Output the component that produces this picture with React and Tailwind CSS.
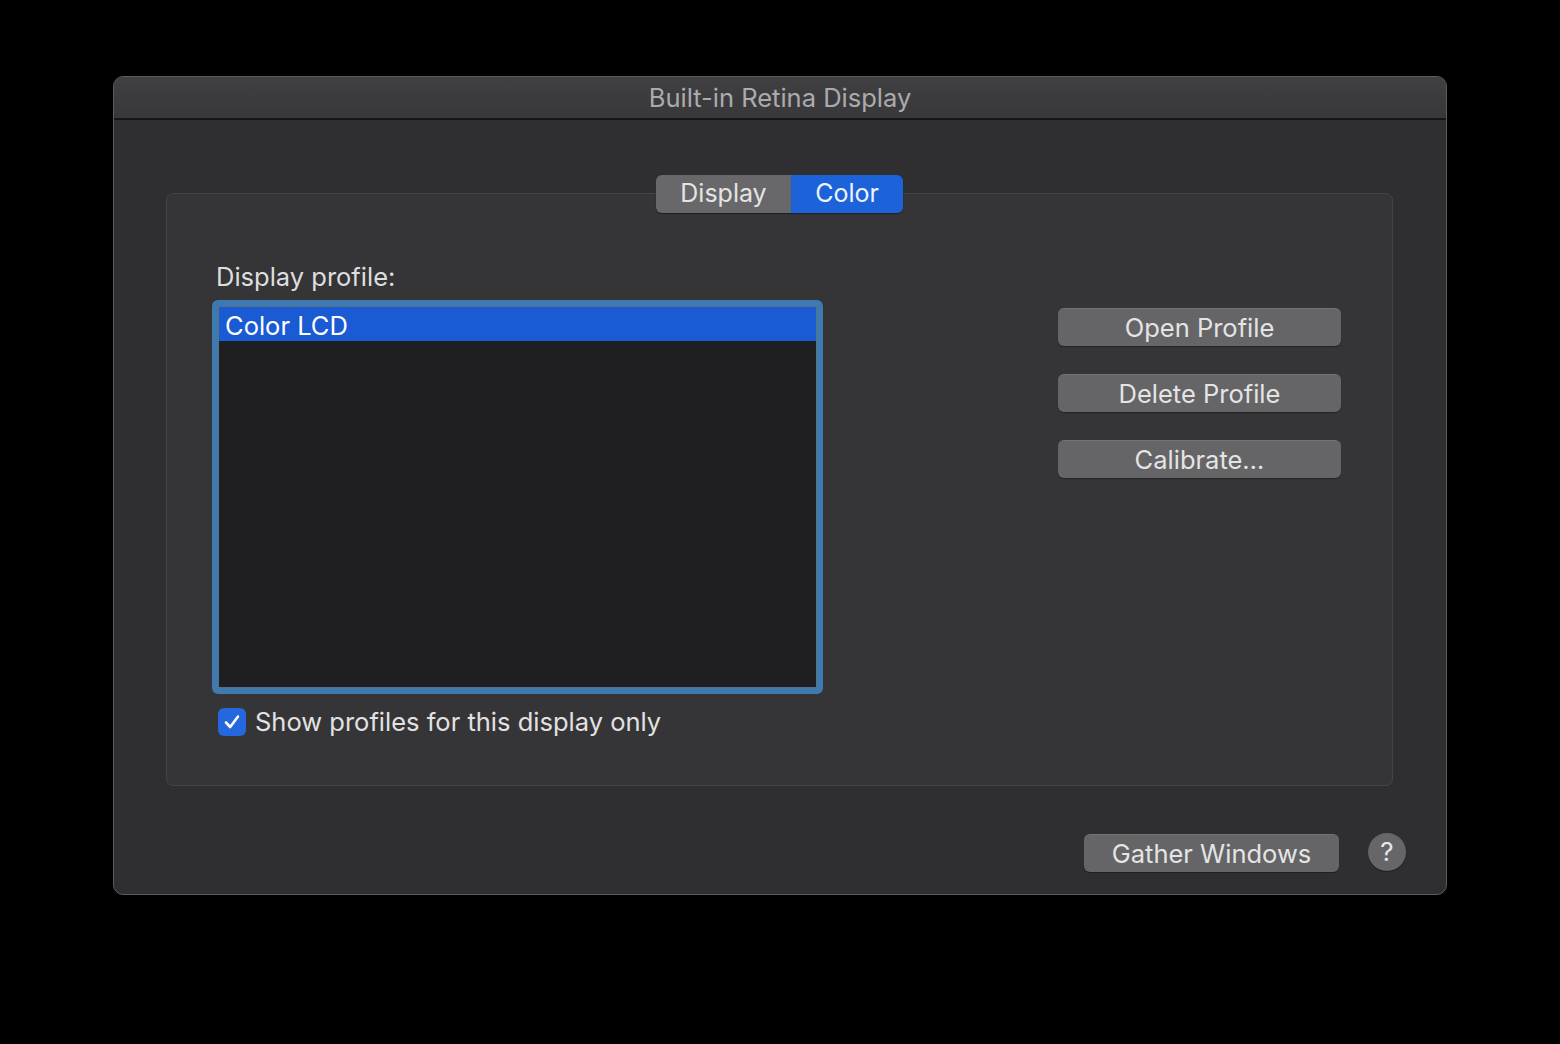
import React from "react";

const font = { fontFamily: "Inter, 'Noto Sans', 'Liberation Sans', sans-serif" };

// Grey push button, macOS dark style
const PushButton = ({ label, className = "" }) => (
  <button
    className={`h-[38px] rounded-[6px] bg-[#656567] text-[25.5px] leading-none text-[#e4e4e4] shadow-[0_1px_1px_rgba(0,0,0,0.35)] border-t border-[#737375] ${className}`}
  >
    {label}
  </button>
);

const SegmentedControl = () => (
  <div className="relative z-10 flex h-[38px] self-center overflow-hidden rounded-[6px] shadow-[0_1px_1px_rgba(0,0,0,0.4)]">
    <div className="flex w-[135px] items-center justify-center bg-[#68686a] text-[25px] text-[#e4e4e4]">
      Display
    </div>
    <div className="flex w-[112px] items-center justify-center bg-[#1c63d9] text-[25px] text-[#eef3ff]">
      Color
    </div>
  </div>
);

const ProfileList = () => (
  <div className="h-[394px] w-[611px] rounded-[6px] border-[5px] border-[#3c7ab1] bg-[#3c7ab1]">
    <div className="h-full w-full border-2 border-[#4d7499] bg-[#1f1f21]">
      <div className="flex h-[34px] items-center bg-[#1a5ad3] pl-[6px] pt-[4px] text-[25.5px] text-white">
        Color LCD
      </div>
    </div>
  </div>
);

const Checkbox = () => (
  <div className="flex h-[28px] w-[28px] items-center justify-center rounded-[6px] bg-[#2467de]">
    <svg width="20" height="20" viewBox="0 0 20 20" fill="none">
      <path d="M4 10.5 L8.2 15 L16 4.5" stroke="white" strokeWidth="2.6" strokeLinecap="round" strokeLinejoin="round" />
    </svg>
  </div>
);

export default function App() {
  return (
    <div className="h-[1044px] w-[1560px] bg-black pl-[113px] pt-[76px]" style={font}>
      <div className="flex h-[819px] w-[1334px] flex-col overflow-hidden rounded-[10px] border border-[#5b5b5d] bg-[#2f2f31]">
        {/* title bar */}
        <div className="flex h-[43px] shrink-0 items-center justify-center border-b-2 border-[#151517] bg-gradient-to-b from-[#404042] to-[#38383a] pt-[2px] text-[25.5px] text-[#ababad]">
          Built-in Retina Display
        </div>

        {/* body */}
        <div className="flex flex-1 flex-col pl-[52px] pr-[53px] pt-[55px]">
          <SegmentedControl />

          <div className="-mt-[20px] flex h-[593px] rounded-[7px] border border-[#444446] bg-[#353537] pl-[45px] pr-[51px] pt-[68px]">
            <div className="flex flex-col">
              <div className="mb-[8px] h-[30px] pl-[4px] text-[25.5px] leading-[30px] text-[#dedede]">Display profile:</div>
              <ProfileList />
              <div className="mt-[9px] flex items-center gap-[9px] pl-[6px]">
                <Checkbox />
                <span className="text-[25.5px] text-[#e2e2e2]">Show profiles for this display only</span>
              </div>
            </div>

            <div className="ml-auto flex flex-col gap-[28px] pt-[46px]">
              <PushButton label="Open Profile" className="w-[283px]" />
              <PushButton label="Delete Profile" className="w-[283px]" />
              <PushButton label="Calibrate…" className="w-[283px]" />
            </div>
          </div>

          <div className="-mr-[13px] mt-[48px] flex items-center justify-end gap-[29px]">
            <PushButton label="Gather Windows" className="w-[255px]" />
            <div className="-mt-[3px] flex h-[38px] w-[38px] items-center justify-center rounded-full bg-[#666668] text-[26px] text-[#e6e6e6] shadow-[0_1px_1px_rgba(0,0,0,0.4)]">
              ?
            </div>
          </div>
        </div>
      </div>
    </div>
  );
}
